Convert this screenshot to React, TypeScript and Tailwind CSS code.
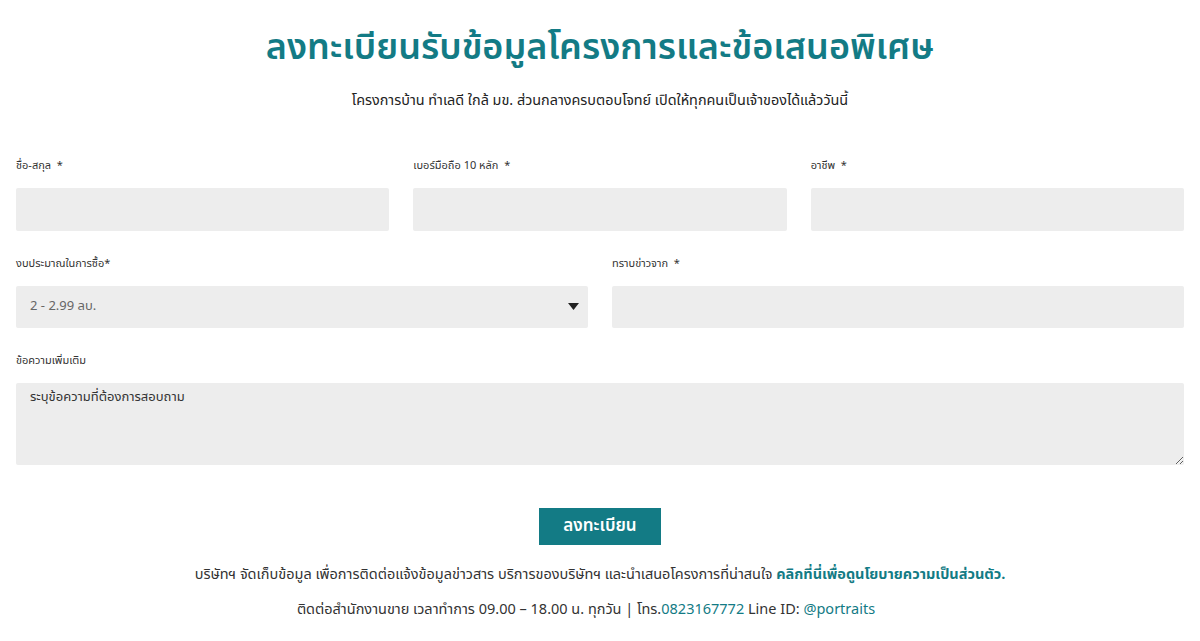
import { useState } from "react";

const font = "font-['Noto_Sans_Thai','Noto_Sans','Liberation_Sans',sans-serif]";

function Label({ children }: { children: React.ReactNode }) {
  return <label className="block text-[11px] leading-4 text-[#333] mb-[14px]">{children}</label>;
}

export default function App() {
  const [budget, setBudget] = useState("2 - 2.99 ลบ.");

  return (
    <main className={`min-h-screen bg-white ${font}`}>
      <div className="px-4 pt-[21px]">
        <h1 className="text-center text-[36px] leading-[54px] font-semibold text-[#137b85]">
          ลงทะเบียนรับข้อมูลโครงการและข้อเสนอพิเศษ
        </h1>
        <p className="text-center text-[14.4px] leading-5 text-[#222] mt-[16px]">
          โครงการบ้าน ทำเลดี ใกล้ มข. ส่วนกลางครบตอบโจทย์ เปิดให้ทุกคนเป็นเจ้าของได้แล้ววันนี้
        </p>

        <form className="mt-[47px]">
          <div className="grid grid-cols-3 gap-6">
            <div>
              <Label>ชื่อ-สกุล &nbsp;*</Label>
              <input className="w-full h-[43px] bg-[#ededed] rounded-[2px] outline-none px-3" />
            </div>
            <div>
              <Label>เบอร์มือถือ 10 หลัก &nbsp;*</Label>
              <input className="w-full h-[43px] bg-[#ededed] rounded-[2px] outline-none px-3" />
            </div>
            <div>
              <Label>อาชีพ &nbsp;*</Label>
              <input className="w-full h-[43px] bg-[#ededed] rounded-[2px] outline-none px-3" />
            </div>
          </div>

          <div className="grid grid-cols-2 gap-6 mt-[25px]">
            <div>
              <Label>งบประมาณในการซื้อ*</Label>
              <div className="relative">
                <select
                  value={budget}
                  onChange={(e) => setBudget(e.target.value)}
                  className="w-full h-[42px] bg-[#ededed] rounded-[2px] outline-none pl-[14px] text-[13px] text-[#666] appearance-none"
                >
                  <option>2 - 2.99 ลบ.</option>
                  <option>3 - 3.99 ลบ.</option>
                  <option>4 ลบ. ขึ้นไป</option>
                </select>
                <svg className="absolute right-[9px] top-[17px] pointer-events-none" width="11" height="7" viewBox="0 0 11 7">
                  <path d="M0 0 H11 L5.5 7 Z" fill="#222" />
                </svg>
              </div>
            </div>
            <div>
              <Label>ทราบข่าวจาก &nbsp;*</Label>
              <input className="w-full h-[42px] bg-[#ededed] rounded-[2px] outline-none px-3" />
            </div>
          </div>

          <div className="mt-[25px]">
            <Label>ข้อความเพิ่มเติม</Label>
            <textarea
              placeholder="ระบุข้อความที่ต้องการสอบถาม"
              className="block w-full h-[82px] bg-[#ededed] rounded-[2px] outline-none px-[14px] pt-[5px] text-[13px] placeholder:text-[#333]"
            />
          </div>

          <div className="flex justify-center mt-[43px]">
            <button
              type="button"
              className="h-[37px] w-[122px] bg-[#137b85] text-white text-[17px] font-semibold"
            >
              ลงทะเบียน
            </button>
          </div>
        </form>

        <p className="text-center text-[14.5px] leading-5 text-[#333] mt-[20px]">
          บริษัทฯ จัดเก็บข้อมูล เพื่อการติดต่อแจ้งข้อมูลข่าวสาร บริการของบริษัทฯ และนำเสนอโครงการที่น่าสนใจ{" "}
          <a href="#" className="font-bold text-[#137b85]">
            คลิกที่นี่เพื่อดูนโยบายความเป็นส่วนตัว.
          </a>
        </p>
        <p className="text-center text-[14.5px] leading-5 text-[#333] mt-[15px] pr-[28px]">
          ติดต่อสำนักงานขาย เวลาทำการ 09.00 – 18.00 น. ทุกวัน | โทร.
          <span className="text-[#137b85]">0823167772</span> Line ID:{" "}
          <span className="text-[#137b85]">@portraits</span>
        </p>
      </div>
    </main>
  );
}
